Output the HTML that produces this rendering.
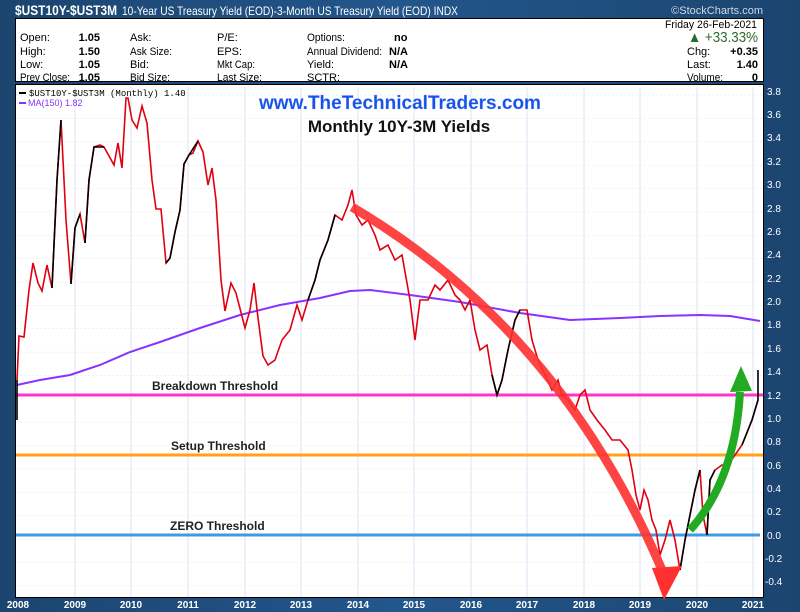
<!DOCTYPE html>
<html><head><meta charset="utf-8"><style>
body{margin:0;width:800px;height:612px;overflow:hidden;background:#1d4a7a;font-family:"Liberation Sans",sans-serif}
</style></head><body>
<svg width="800" height="612" xmlns="http://www.w3.org/2000/svg" style="position:absolute;left:0;top:0">
<defs>
<linearGradient id="bg" x1="0" y1="0" x2="1" y2="0"><stop offset="0" stop-color="#1b456f"/><stop offset="0.5" stop-color="#23568c"/><stop offset="1" stop-color="#1b456f"/></linearGradient>
<pattern id="gr" width="800" height="23.37" patternUnits="userSpaceOnUse" y="1.3"><line x1="0" y1="0" x2="800" y2="0" stroke="#dfe3ef" stroke-dasharray="2,2"/></pattern>
</defs>
<rect width="800" height="612" fill="url(#bg)"/>
<text x="15" y="15" font-size="14" font-weight="bold" fill="#fff" textLength="102" lengthAdjust="spacingAndGlyphs">$UST10Y-$UST3M</text>
<text x="122" y="15" font-size="12" fill="#fff" textLength="336" lengthAdjust="spacingAndGlyphs">10-Year US Treasury Yield (EOD)-3-Month US Treasury Yield (EOD)  INDX</text>
<text x="763" y="14" font-size="11" fill="#cfd8e6" text-anchor="end">©StockCharts.com</text>
<rect x="15.5" y="18.5" width="748" height="63" fill="#fff" stroke="#000"/>
<g font-size="11" fill="#000">
<text x="20" y="41">Open:</text><text x="20" y="55">High:</text><text x="20" y="68">Low:</text><text x="20" y="81" textLength="50" lengthAdjust="spacingAndGlyphs">Prev Close:</text>
<g font-weight="bold" text-anchor="end"><text x="100" y="41">1.05</text><text x="100" y="55">1.50</text><text x="100" y="68">1.05</text><text x="100" y="81">1.05</text></g>
<text x="130" y="41">Ask:</text><text x="130" y="55" textLength="42" lengthAdjust="spacingAndGlyphs">Ask Size:</text><text x="130" y="68">Bid:</text><text x="130" y="81" textLength="40" lengthAdjust="spacingAndGlyphs">Bid Size:</text>
<text x="217" y="41">P/E:</text><text x="217" y="55">EPS:</text><text x="217" y="68" textLength="38" lengthAdjust="spacingAndGlyphs">Mkt Cap:</text><text x="217" y="81" textLength="45" lengthAdjust="spacingAndGlyphs">Last Size:</text>
<text x="307" y="41" textLength="38" lengthAdjust="spacingAndGlyphs">Options:</text><text x="307" y="55" textLength="75" lengthAdjust="spacingAndGlyphs">Annual Dividend:</text><text x="307" y="68">Yield:</text><text x="307" y="81">SCTR:</text>
<g font-weight="bold"><text x="394" y="41">no</text><text x="389" y="55">N/A</text><text x="389" y="68">N/A</text></g>
<text x="757" y="28" text-anchor="end" textLength="92" lengthAdjust="spacingAndGlyphs">Friday  26-Feb-2021</text>
<text x="758" y="42" text-anchor="end" font-size="15" fill="#2b6b2b" textLength="70" lengthAdjust="spacingAndGlyphs">▲ +33.33%</text>
<text x="687" y="55">Chg:</text><text x="758" y="55" text-anchor="end" font-weight="bold">+0.35</text>
<text x="687" y="68">Last:</text><text x="758" y="68" text-anchor="end" font-weight="bold">1.40</text>
<text x="687" y="81" textLength="36" lengthAdjust="spacingAndGlyphs">Volume:</text><text x="758" y="81" text-anchor="end" font-weight="bold">0</text>
</g>
<rect x="15.5" y="84.5" width="748" height="513" fill="#fff" stroke="#000"/>
<rect x="16" y="85" width="747" height="512" fill="url(#gr)"/>
<g stroke="#dfe3f5">
<line x1="75" y1="87" x2="75" y2="597"/><line x1="131" y1="87" x2="131" y2="597"/><line x1="188" y1="87" x2="188" y2="597"/><line x1="245" y1="87" x2="245" y2="597"/><line x1="301" y1="87" x2="301" y2="597"/><line x1="358" y1="87" x2="358" y2="597"/><line x1="414" y1="87" x2="414" y2="597"/><line x1="471" y1="87" x2="471" y2="597"/><line x1="527" y1="87" x2="527" y2="597"/><line x1="584" y1="87" x2="584" y2="597"/><line x1="640" y1="87" x2="640" y2="597"/><line x1="697" y1="87" x2="697" y2="597"/><line x1="753" y1="87" x2="753" y2="597"/>
</g>
<g font-size="10" fill="#fff" text-anchor="middle" font-weight="bold">
<text x="18" y="608">2008</text><text x="75" y="608">2009</text><text x="131" y="608">2010</text><text x="188" y="608">2011</text><text x="245" y="608">2012</text><text x="301" y="608">2013</text><text x="358" y="608">2014</text><text x="414" y="608">2015</text><text x="471" y="608">2016</text><text x="527" y="608">2017</text><text x="584" y="608">2018</text><text x="640" y="608">2019</text><text x="697" y="608">2020</text><text x="753" y="608">2021</text>
</g>
<g font-size="10" fill="#fff">
<text x="767" y="95">3.8</text><text x="767" y="118">3.6</text><text x="767" y="141">3.4</text><text x="767" y="165">3.2</text><text x="767" y="188">3.0</text><text x="767" y="212">2.8</text><text x="767" y="235">2.6</text><text x="767" y="258">2.4</text><text x="767" y="282">2.2</text><text x="767" y="305">2.0</text><text x="767" y="328">1.8</text><text x="767" y="352">1.6</text><text x="767" y="375">1.4</text><text x="767" y="399">1.2</text><text x="767" y="422">1.0</text><text x="767" y="445">0.8</text><text x="767" y="469">0.6</text><text x="767" y="492">0.4</text><text x="767" y="515">0.2</text><text x="767" y="539">0.0</text><text x="765" y="562">-0.2</text><text x="765" y="585">-0.4</text>
</g>
<line x1="16" y1="395" x2="763" y2="395" stroke="#ff33cc" stroke-width="3"/>
<line x1="16" y1="455" x2="763" y2="455" stroke="#ffa21a" stroke-width="3"/>
<line x1="16" y1="535" x2="760" y2="535" stroke="#3d9be0" stroke-width="3"/>
<g font-size="12" font-weight="bold" fill="#222">
<text x="152" y="390">Breakdown Threshold</text><text x="171" y="450">Setup Threshold</text><text x="170" y="530">ZERO Threshold</text>
</g>
<polyline fill="none" stroke="#8833ff" stroke-width="2" points="17,385 40,380 70,375 100,365 130,352 160,342 200,328 240,315 280,305 320,298 350,291 370,290 410,295 460,302 520,313 570,320 620,318 660,316 700,315 730,316 760,321"/>
<polyline fill="none" stroke="#e00010" stroke-width="1.6" points="17,380 19,336 24,337 29,290 33,263 38,283 42,291 47,265 52,288 57,180 61,120 66,220 71,284 75,228 80,214 85,243 89,180 94,147 100,145 104,147 114,165 118,143 122,168 126,98 128,98 132,120 137,128 142,106 147,123 152,180 156,209 161,209 166,263 170,258 175,232 180,210 184,164 189,155 193,153 198,141 203,152 208,185 212,168 216,200 221,280 225,311 231,283 236,293 245,328 250,310 254,283 258,318 263,356 268,365 275,360 282,340 290,330 297,305 302,320 308,300 315,280 320,260 328,240 335,215 342,220 348,205 352,190 356,215 362,225 368,220 375,235 380,250 388,245 395,260 402,255 410,300 415,340 420,300 428,300 435,285 440,290 448,280 455,295 460,300 465,310 470,300 475,330 480,350 487,345 492,375 497,395 502,380 508,350 515,320 520,310 527,310 532,340 538,360 545,375 552,390 558,380 562,395 568,400 575,410 580,395 585,390 590,410 597,420 605,430 612,440 620,440 628,450 632,470 636,495 640,510 644,490 648,500 652,520 656,530 660,555 665,540 670,520 675,540 680,570 685,540 690,515 695,490 700,470 703,515 707,535 710,480 715,470 722,465 728,465 735,455 742,445 748,430 752,420 758,400"/>
<polyline fill="none" stroke="#000" stroke-width="1.6" points="17,420 17,380"/>
<polyline fill="none" stroke="#000" stroke-width="1.6" points="52,288 57,180 61,120"/>
<polyline fill="none" stroke="#000" stroke-width="1.6" points="71,284 75,228 80,214"/>
<polyline fill="none" stroke="#000" stroke-width="1.6" points="85,243 89,180 94,147 104,147"/>
<polyline fill="none" stroke="#000" stroke-width="1.6" points="166,263 170,258 175,232 180,210 184,164 189,155 198,141"/>
<polyline fill="none" stroke="#000" stroke-width="1.6" points="308,300 315,280 320,260 328,240 335,215"/>
<polyline fill="none" stroke="#000" stroke-width="1.6" points="492,375 497,395 502,380 508,350 515,320 520,310"/>
<polyline fill="none" stroke="#000" stroke-width="1.6" points="680,570 685,540 690,515 695,490 700,470"/>
<polyline fill="none" stroke="#000" stroke-width="1.6" points="707,535 710,480 715,470"/>
<polyline fill="none" stroke="#000" stroke-width="1.6" points="742,445 748,430 752,420 758,400 758,370"/>
<path d="M352,207 Q560,330 662,570" fill="none" stroke="#ff3030" stroke-width="9" opacity="0.9"/>
<polygon points="664,600 652,568 682,566" fill="#ff3030"/>
<path d="M690,530 Q735,480 740,392" fill="none" stroke="#22aa22" stroke-width="8"/>
<polygon points="741,366 730,392 752,391" fill="#22aa22"/>
<text x="400" y="109" font-size="19" font-weight="bold" fill="#1652e6" text-anchor="middle" stroke="#88aaff" stroke-width="0.3">www.TheTechnicalTraders.com</text>
<text x="399" y="132" font-size="17" font-weight="bold" fill="#111" text-anchor="middle">Monthly 10Y-3M Yields</text>
<line x1="19" y1="93" x2="26" y2="93" stroke="#000" stroke-width="2"/>
<text x="29" y="96" font-family="Liberation Mono,monospace" font-size="9" fill="#000">$UST10Y-$UST3M (Monthly) 1.40</text>
<line x1="19" y1="103" x2="26" y2="103" stroke="#8833ff" stroke-width="2"/>
<text x="28" y="106" font-size="9" fill="#8833ff">MA(150) 1.82</text>
</svg>
</body></html>
